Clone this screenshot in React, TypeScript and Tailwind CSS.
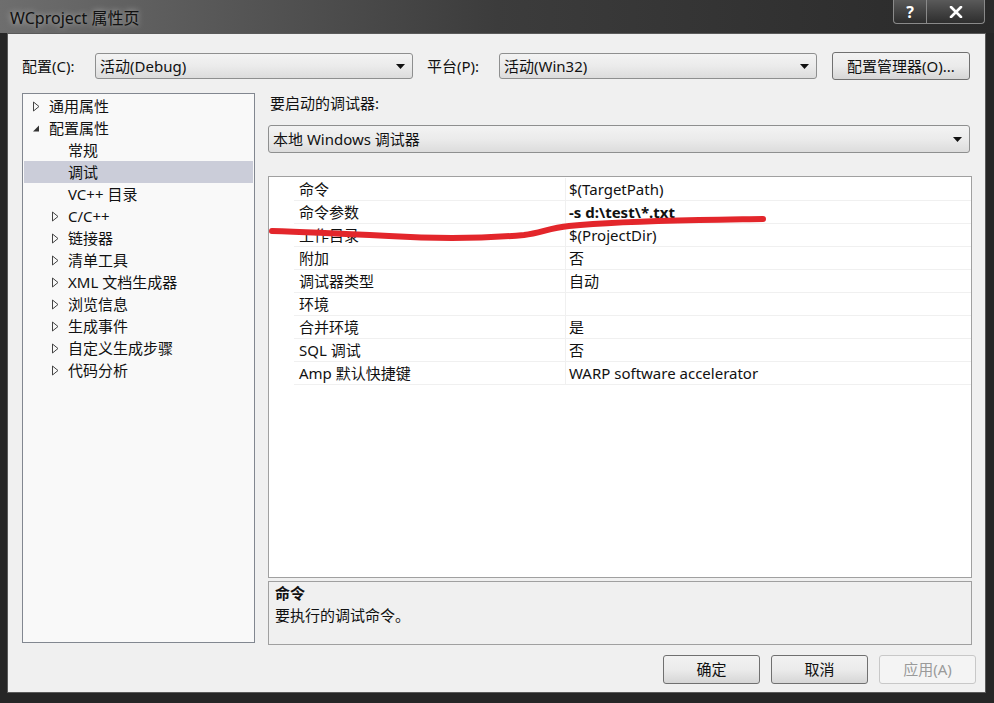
import React from "react";

const font = { fontFamily: '"Segoe UI", "Noto Sans", "Noto Sans CJK SC", sans-serif' };

const treeItems: { label: string; level: number; arrow: "closed" | "open" | "none"; selected?: boolean }[] = [
  { label: "通用属性", level: 0, arrow: "closed" },
  { label: "配置属性", level: 0, arrow: "open" },
  { label: "常规", level: 1, arrow: "none" },
  { label: "调试", level: 1, arrow: "none", selected: true },
  { label: "VC++ 目录", level: 1, arrow: "none" },
  { label: "C/C++", level: 1, arrow: "closed" },
  { label: "链接器", level: 1, arrow: "closed" },
  { label: "清单工具", level: 1, arrow: "closed" },
  { label: "XML 文档生成器", level: 1, arrow: "closed" },
  { label: "浏览信息", level: 1, arrow: "closed" },
  { label: "生成事件", level: 1, arrow: "closed" },
  { label: "自定义生成步骤", level: 1, arrow: "closed" },
  { label: "代码分析", level: 1, arrow: "closed" },
];

const props: { name: string; value: string; bold?: boolean }[] = [
  { name: "命令", value: "$(TargetPath)" },
  { name: "命令参数", value: "-s d:\\test\\*.txt", bold: true },
  { name: "工作目录", value: "$(ProjectDir)" },
  { name: "附加", value: "否" },
  { name: "调试器类型", value: "自动" },
  { name: "环境", value: "" },
  { name: "合并环境", value: "是" },
  { name: "SQL 调试", value: "否" },
  { name: "Amp 默认快捷键", value: "WARP software accelerator" },
];

function Combo({ text, className }: { text: string; className: string }) {
  return (
    <div
      className={`flex items-center justify-between h-[26px] rounded-[3px] border border-[#8e8f8f] bg-gradient-to-b from-[#f3f3f3] via-[#ebebeb] to-[#dcdcdc] pl-[4px] pr-[7px] ${className}`}
    >
      <span className="text-[15px] text-[#111]">{text}</span>
      <svg width="9" height="5" viewBox="0 0 9 5">
        <path d="M0 0 L9 0 L4.5 5 Z" fill="#111" />
      </svg>
    </div>
  );
}

function Button({ label, disabled, className }: { label: string; disabled?: boolean; className: string }) {
  return (
    <div
      className={`flex items-center justify-center rounded-[3px] border text-[15px] ${
        disabled
          ? "border-[#c8c8c8] bg-[#f4f4f4] text-[#9a9a9a]"
          : "border-[#707070] bg-gradient-to-b from-[#f2f2f2] via-[#ebebeb] to-[#d6d6d6] text-[#111]"
      } ${className}`}
    >
      {label}
    </div>
  );
}

function Arrow({ open }: { open: boolean }) {
  return open ? (
    <svg width="9" height="9" viewBox="0 0 9 9">
      <path d="M7 1.5 L7 7.5 L1 7.5 Z" fill="#333" />
    </svg>
  ) : (
    <svg width="9" height="11" viewBox="0 0 9 11">
      <path d="M1.5 1 L7 5.5 L1.5 10 Z" fill="none" stroke="#444" strokeWidth="1" />
    </svg>
  );
}

export default function App() {
  return (
    <div className="w-[994px] h-[703px] bg-[#262626] flex flex-col overflow-hidden" style={font}>
      {/* title bar */}
      <div className="relative h-[33px] flex items-center pl-[10px] bg-gradient-to-r from-[#6e6e6e] via-[#3c3c3c] to-[#2a2a2a]">
        <span className="text-[16px] text-[#111] mt-[2px] [text-shadow:0_0_6px_rgba(255,255,255,0.6)]">WCproject 属性页</span>
        <div className="absolute right-[9px] top-0 flex">
          <div className="w-[34px] h-[24px] flex items-center justify-center border border-t-0 border-[#8a8a8a] rounded-bl-[4px] bg-gradient-to-b from-[#5a5a5a] to-[#2e2e2e] text-white font-bold text-[16px]">
            ?
          </div>
          <div className="w-[58px] h-[24px] flex items-center justify-center border border-t-0 border-l-0 border-[#8a8a8a] rounded-br-[4px] bg-gradient-to-b from-[#5a5a5a] to-[#2e2e2e]">
            <svg width="14" height="12" viewBox="0 0 14 12">
              <path d="M2 1 L12 11 M12 1 L2 11" stroke="#fff" strokeWidth="2.6" strokeLinecap="round" />
            </svg>
          </div>
        </div>
      </div>

      {/* client */}
      <div className="relative ml-[7px] mr-[8px] mb-[10px] flex-1 border border-[#5a5a5a] bg-[#f0f0f0] flex flex-col pt-[19px] pl-[14px] pr-[12px]">
        {/* top row */}
        <div className="flex items-center h-[26px]">
          <span className="w-[73px] text-[15px] text-[#111]">配置(C):</span>
          <Combo text="活动(Debug)" className="w-[318px]" />
          <span className="ml-[14px] w-[72px] text-[15px] text-[#111]">平台(P):</span>
          <Combo text="活动(Win32)" className="w-[318px]" />
          <Button label="配置管理器(O)..." className="ml-[15px] w-[138px] h-[28px]" />
        </div>

        <div className="flex mt-[14px] gap-[13px]">
          {/* tree */}
          <div className="w-[233px] h-[550px] border border-[#828790] bg-[#f9f9f9] pt-[1px] px-[1px]">
            {treeItems.map((t) => (
              <div
                key={t.label}
                className={`h-[22px] flex items-center text-[15px] text-[#111] ${t.selected ? "bg-[#cbcdd9]" : ""} ${
                  t.level === 0 ? "pl-[8px]" : "pl-[27px]"
                }`}
              >
                <span className="w-[17px] flex items-center">
                  {t.arrow !== "none" && <Arrow open={t.arrow === "open"} />}
                </span>
                <span>{t.label}</span>
              </div>
            ))}
          </div>

          {/* right side */}
          <div className="flex-1 flex flex-col">
            <div className="h-[20px] pl-[2px] flex items-center text-[15px] text-[#111]">要启动的调试器:</div>
            <Combo text="本地 Windows 调试器" className="mt-[12px] w-[702px] h-[28px]" />

            <div className="relative mt-[23px] h-[402px] w-[704px] border border-[#a0a0a0] bg-white pt-[1px]">
              {props.map((p) => (
                <div key={p.name} className="flex h-[23px] text-[15px] text-[#111]">
                  <div className="w-[25px]" />
                  <div className="w-[272px] pl-[5px] flex items-center border-b border-r border-[#f0f0f0]">{p.name}</div>
                  <div className={`flex-1 pl-[3px] flex items-center border-b border-[#f0f0f0] ${p.bold ? "font-bold" : ""}`}>
                    {p.value}
                  </div>
                </div>
              ))}
              <svg className="absolute left-0 top-0 pointer-events-none" width="704" height="80" viewBox="0 0 704 80">
                <path
                  d="M3 54 C40 55 80 57 120 59 C170 62 220 61 255 58 C272 56 280 51 300 49 C340 45 380 44 430 43 C460 43 480 42 494 42"
                  fill="none"
                  stroke="#e3262b"
                  strokeWidth="6"
                  strokeLinecap="round"
                />
              </svg>
            </div>

            <div className="mt-[3px] h-[64px] w-[704px] border border-[#a0a0a0] bg-[#f0f0f0] pl-[6px] pt-[1px] text-[15px] text-[#111]">
              <div className="font-bold leading-[20px]">命令</div>
              <div className="mt-[2px] leading-[20px]">要执行的调试命令。</div>
            </div>
          </div>
        </div>

        {/* bottom buttons */}
        <div className="flex justify-end gap-[11px] mt-[10px]">
          <Button label="确定" className="w-[97px] h-[29px]" />
          <Button label="取消" className="w-[97px] h-[29px]" />
          <Button label="应用(A)" disabled className="w-[97px] h-[29px] mr-[-3px]" />
        </div>
      </div>
    </div>
  );
}
